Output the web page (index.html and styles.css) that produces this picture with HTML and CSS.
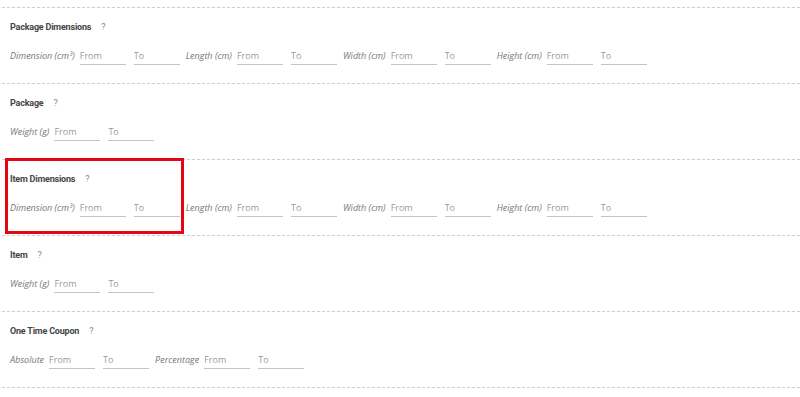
FILE: index.html
```html
<!DOCTYPE html>
<html lang="en">

<head>
    <meta charset="UTF-8">
    <meta name="viewport" content="width=device-width, initial-scale=1.0">
    <title>Filters</title>
    <link rel="stylesheet" href="styles.css">
</head>

<body>
    <div class="filters">
        <div class="group">
            <div class="groupTitle">Package Dimensions <span class="help">?</span></div>
            <div class="row">
                <span class="lbl">Dimension (cm³)</span>
                <input type="text" placeholder="From" />
                <input type="text" placeholder="To" />
                <span class="lbl">Length (cm)</span>
                <input type="text" placeholder="From" />
                <input type="text" placeholder="To" />
                <span class="lbl">Width (cm)</span>
                <input type="text" placeholder="From" />
                <input type="text" placeholder="To" />
                <span class="lbl">Height (cm)</span>
                <input type="text" placeholder="From" />
                <input type="text" placeholder="To" />
            </div>
        </div>

        <div class="group">
            <div class="groupTitle">Package <span class="help">?</span></div>
            <div class="row">
                <span class="lbl">Weight (g)</span>
                <input type="text" placeholder="From" />
                <input type="text" placeholder="To" />
            </div>
        </div>

        <div class="group highlighted">
            <div class="groupTitle">Item Dimensions <span class="help">?</span></div>
            <div class="row">
                <span class="lbl">Dimension (cm³)</span>
                <input type="text" placeholder="From" />
                <input type="text" placeholder="To" />
                <span class="lbl">Length (cm)</span>
                <input type="text" placeholder="From" />
                <input type="text" placeholder="To" />
                <span class="lbl">Width (cm)</span>
                <input type="text" placeholder="From" />
                <input type="text" placeholder="To" />
                <span class="lbl">Height (cm)</span>
                <input type="text" placeholder="From" />
                <input type="text" placeholder="To" />
            </div>
            <!-- annotation box drawn over the screenshot -->
            <div class="marker"></div>
        </div>

        <div class="group">
            <div class="groupTitle">Item <span class="help">?</span></div>
            <div class="row">
                <span class="lbl">Weight (g)</span>
                <input type="text" placeholder="From" />
                <input type="text" placeholder="To" />
            </div>
        </div>

        <div class="group last">
            <div class="groupTitle">One Time Coupon <span class="help">?</span></div>
            <div class="row">
                <span class="lbl">Absolute</span>
                <input type="text" placeholder="From" />
                <input type="text" placeholder="To" />
                <span class="lbl">Percentage</span>
                <input type="text" placeholder="From" />
                <input type="text" placeholder="To" />
            </div>
        </div>
    </div>
</body>

</html>
```

FILE: styles.css
```css
body {
    margin: 0;
    background: #fff;
    font-family: Roboto, "Liberation Sans", sans-serif;
}

.filters {
    padding: 7px 0 0 2px;
}

.group {
    position: relative;
    border-top: 1px dashed #cfcfcf;
    padding: 12px 0 18px 8px;
}

.group.last {
    border-bottom: 1px dashed #cfcfcf;
}

.groupTitle {
    font-size: 9px;
    font-weight: bold;
    letter-spacing: -0.2px;
    color: #454545;
    line-height: 14px;
    height: 14px;
    margin-bottom: 12px;
}

.help {
    font-weight: normal;
    color: #8a8a8a;
    margin-left: 8px;
}

.row {
    display: flex;
    align-items: center;
    height: 19px;
}

.lbl {
    font-family: "Open Sans", sans-serif;
    font-style: italic;
    font-size: 9px;
    color: #777;
    margin-right: 5px;
    white-space: nowrap;
}

input {
    box-sizing: border-box;
    width: 46px;
    height: 19px;
    border: none;
    border-bottom: 1px solid #c4c4c4;
    padding: 0;
    margin: 0 8px 0 0;
    font-family: "Open Sans", sans-serif;
    font-size: 9px;
    color: #555;
    outline: none;
    background: transparent;
}

input + input {
    margin-right: 6px;
}

input::placeholder {
    color: #9a9a9a;
}

.marker {
    position: absolute;
    left: 3px;
    top: -2px;
    width: 179px;
    height: 76px;
    box-sizing: border-box;
    border: 3px solid #e30613;
    pointer-events: none;
}
```
